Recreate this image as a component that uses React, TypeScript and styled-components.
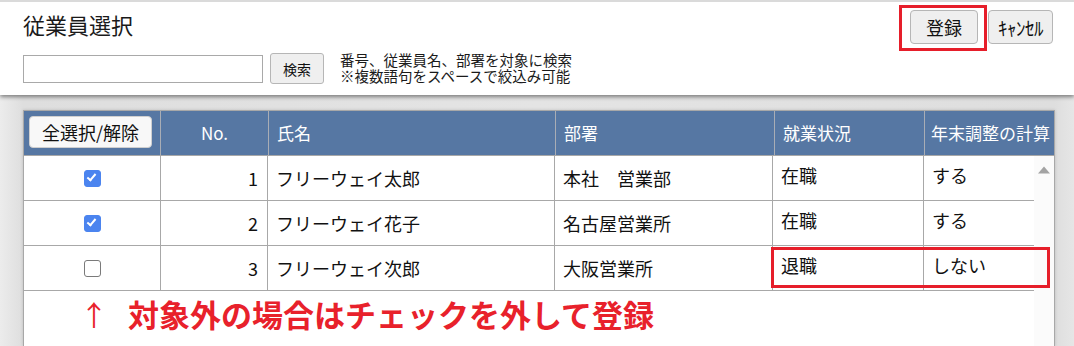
import React from "react";
import styled, { createGlobalStyle } from "styled-components";

const GlobalStyle = createGlobalStyle`
  html, body { margin: 0; padding: 0; }
  body {
    font-family: "Noto Sans CJK JP", "Noto Sans", sans-serif;
    background: #e5e5e5;
    color: #1a1a1a;
    overflow: hidden;
  }
  *, *::before, *::after { box-sizing: border-box; }
`;

const Page = styled.div`
  width: 1074px;
  height: 346px;
  display: flex;
  flex-direction: column;
  overflow: hidden;
  background: linear-gradient(to right, #ececec 0, #dedede 23px, #e4e4e4 50%, #dedede 1055px, #e6e6e6 100%);
`;

const TopPanel = styled.header`
  position: relative;
  z-index: 2;
  flex: none;
  height: 95px;
  background: #fff;
  border-top: 2px solid #dadada;
  box-shadow: 0 2px 4px rgba(0, 0, 0, 0.45);
  display: flex;
  justify-content: space-between;
  align-items: flex-start;
  padding: 0 21px 0 23px;
`;

const LeftBlock = styled.div`
  display: flex;
  flex-direction: column;
`;

const Title = styled.h1`
  margin: 8px 0 0;
  font-size: 22px;
  font-weight: 400;
  line-height: 29px;
  color: #1a1a1a;
`;

const SearchRow = styled.div`
  margin-top: 14px;
  height: 31px;
  display: flex;
  align-items: center;
`;

const SearchInput = styled.input`
  width: 240px;
  height: 28px;
  border: 1px solid #a9a9a9;
  border-radius: 0;
  padding: 0 4px;
  font-size: 14px;
  font-family: inherit;
  outline: none;
`;

const BaseButton = styled.button`
  font-family: "Noto Sans CJK JP", sans-serif;
  background: #efefef;
  border: 1px solid #b6b6b6;
  border-radius: 4px;
  color: #111;
  padding: 0;
  display: flex;
  align-items: center;
  justify-content: center;
  cursor: pointer;
`;

const SearchButton = styled(BaseButton)`
  margin-left: 7px;
  width: 54px;
  height: 31px;
  font-size: 14px;
  border-radius: 3px;
`;

const HelpText = styled.div`
  margin-left: 16px;
  margin-top: -2px;
  font-size: 14.5px;
  line-height: 16px;
  color: #1a1a1a;
  white-space: nowrap;
`;

const HelpLine = styled.div`
  height: 16px;
`;

const Actions = styled.div`
  margin-top: 3px;
  display: flex;
  align-items: flex-start;
`;

const RedFrame = styled.div`
  border: 3px solid #e61e2a;
  padding: 2px 6px 4px 8px;
`;

const PrimaryButton = styled(BaseButton)`
  width: 68px;
  height: 34px;
  font-size: 18px;
`;

const CancelButton = styled(BaseButton)`
  margin-top: 5px;
  margin-left: 1px;
  width: 65px;
  height: 34px;
  font-size: 19px;
  letter-spacing: -0.5px;
`;

const Main = styled.main`
  flex: 1;
  display: flex;
  padding: 15px 19px 0 23px;
  min-height: 0;
`;

const TableFrame = styled.section`
  width: 1032px;
  flex: none;
  display: flex;
  flex-direction: column;
  background: #fff;
  border-left: 1px solid #a8a8a8;
  border-right: 1px solid #a8a8a8;
  box-shadow: 0 0 3px rgba(0, 0, 0, 0.15);
`;

const HeaderRow = styled.div`
  flex: none;
  display: grid;
  grid-template-columns: 136px 108px 287px 219px 150px 130px;
  height: 46px;
  background: #5677a3;
  border-top: 1px solid #a8a8a8;
  border-bottom: 1px solid #a8a8a8;
`;

const HeadCell = styled.div<{ $center?: boolean; $first?: boolean; $pad?: number }>`
  display: flex;
  align-items: center;
  justify-content: ${(p) => (p.$center ? "center" : "flex-start")};
  padding-left: ${(p) => (p.$center ? 0 : p.$pad ?? 8)}px;
  padding-bottom: 2px;
  border-left: ${(p) => (p.$first ? "none" : "1px solid #a9adb5")};
  color: #fff;
  font-size: 17px;
  white-space: nowrap;
  overflow: hidden;
`;

const SelectAllButton = styled.button`
  width: 123px;
  height: 32px;
  background: #f8f8f8;
  border: 1px solid #cfcfcf;
  border-radius: 4px;
  font-family: "Noto Sans CJK JP", sans-serif;
  font-size: 18px;
  color: #111;
  padding: 0;
  cursor: pointer;
`;

const BodyArea = styled.div`
  position: relative;
  flex: 1;
  display: flex;
  min-height: 0;
`;

const Rows = styled.div`
  width: 1010px;
  display: flex;
  flex-direction: column;
`;

const Row = styled.div`
  display: grid;
  grid-template-columns: 136px 107px 287px 218px 151px 111px;
  height: 45px;
  border-bottom: 1px solid #a8a8a8;
`;

const Cell = styled.div<{ $align?: "left" | "right" | "center"; $first?: boolean; $raise?: boolean }>`
  display: flex;
  align-items: center;
  justify-content: ${(p) =>
    p.$align === "right" ? "flex-end" : p.$align === "center" ? "center" : "flex-start"};
  padding: 0 ${(p) => (p.$align === "right" ? "9px" : "0")} ${(p) => (p.$raise ? "7px" : "0")}
    ${(p) => (p.$align === "left" || !p.$align ? "8px" : "0")};
  border-left: ${(p) => (p.$first ? "none" : "1px solid #a8a8a8")};
  font-size: 18px;
  color: #111;
  white-space: nowrap;
  overflow: hidden;
`;

const Check = styled.input.attrs({ type: "checkbox" })`
  appearance: none;
  -webkit-appearance: none;
  position: relative;
  margin: 0;
  width: 17px;
  height: 17px;
  border-radius: 3px;
  border: 1.5px solid #7a7a7a;
  background: #fff;
  cursor: pointer;

  &:checked {
    background: #4b84ef;
    border-color: #4b84ef;
  }
  &:checked::after {
    content: "";
    position: absolute;
    left: 4.5px;
    top: 1px;
    width: 5px;
    height: 9px;
    border: solid #fff;
    border-width: 0 2.5px 2.5px 0;
    transform: rotate(40deg);
  }
`;

const Scrollbar = styled.div`
  width: 20px;
  flex: none;
  background: #fbfbfb;
  display: flex;
  justify-content: center;
  padding-top: 10px;
`;

const HighlightBox = styled.div`
  position: absolute;
  left: 747px;
  top: 91px;
  width: 279px;
  height: 41px;
  border: 3px solid #e61e2a;
  pointer-events: none;
`;

const Notice = styled.div`
  display: flex;
  align-items: center;
  padding: 5px 0 0 56px;
  color: #e8212b;
  font-size: 31px;
  line-height: 36px;
  font-weight: 700;
  white-space: nowrap;
`;

const Arrow = styled.span`
  font-weight: 400;
  width: 48px;
  font-size: 28px;
`;

type Employee = {
  no: number;
  name: string;
  dept: string;
  status: string;
  calc: string;
  checked: boolean;
};

const employees: Employee[] = [
  { no: 1, name: "フリーウェイ太郎", dept: "本社　営業部", status: "在職", calc: "する", checked: true },
  { no: 2, name: "フリーウェイ花子", dept: "名古屋営業所", status: "在職", calc: "する", checked: true },
  { no: 3, name: "フリーウェイ次郎", dept: "大阪営業所", status: "退職", calc: "しない", checked: false },
];

export default function App() {
  return (
    <>
      <GlobalStyle />
      <Page>
        <TopPanel>
          <LeftBlock>
            <Title>従業員選択</Title>
            <SearchRow>
              <SearchInput type="text" />
              <SearchButton>検索</SearchButton>
              <HelpText>
                <HelpLine>番号、従業員名、部署を対象に検索</HelpLine>
                <HelpLine>※複数語句をスペースで絞込み可能</HelpLine>
              </HelpText>
            </SearchRow>
          </LeftBlock>
          <Actions>
            <RedFrame>
              <PrimaryButton>登録</PrimaryButton>
            </RedFrame>
            <CancelButton>ｷｬﾝｾﾙ</CancelButton>
          </Actions>
        </TopPanel>
        <Main>
          <TableFrame>
            <HeaderRow>
              <HeadCell $first $pad={5}>
                <SelectAllButton>全選択/解除</SelectAllButton>
              </HeadCell>
              <HeadCell $center>No.</HeadCell>
              <HeadCell>氏名</HeadCell>
              <HeadCell>部署</HeadCell>
              <HeadCell>就業状況</HeadCell>
              <HeadCell $pad={6}>年末調整の計算</HeadCell>
            </HeaderRow>
            <BodyArea>
              <Rows>
                {employees.map((e) => (
                  <Row key={e.no}>
                    <Cell $first $align="center">
                      <Check defaultChecked={e.checked} />
                    </Cell>
                    <Cell $align="right">{e.no}</Cell>
                    <Cell>{e.name}</Cell>
                    <Cell>{e.dept}</Cell>
                    <Cell $raise>{e.status}</Cell>
                    <Cell $raise>{e.calc}</Cell>
                  </Row>
                ))}
                <Notice>
                  <Arrow>↑</Arrow>
                  対象外の場合はチェックを外して登録
                </Notice>
              </Rows>
              <Scrollbar>
                <svg width="12" height="8" viewBox="0 0 12 8">
                  <polygon points="0,7.5 6,0.5 12,7.5" fill="#a3a3a3" />
                </svg>
              </Scrollbar>
              <HighlightBox />
            </BodyArea>
          </TableFrame>
        </Main>
      </Page>
    </>
  );
}
